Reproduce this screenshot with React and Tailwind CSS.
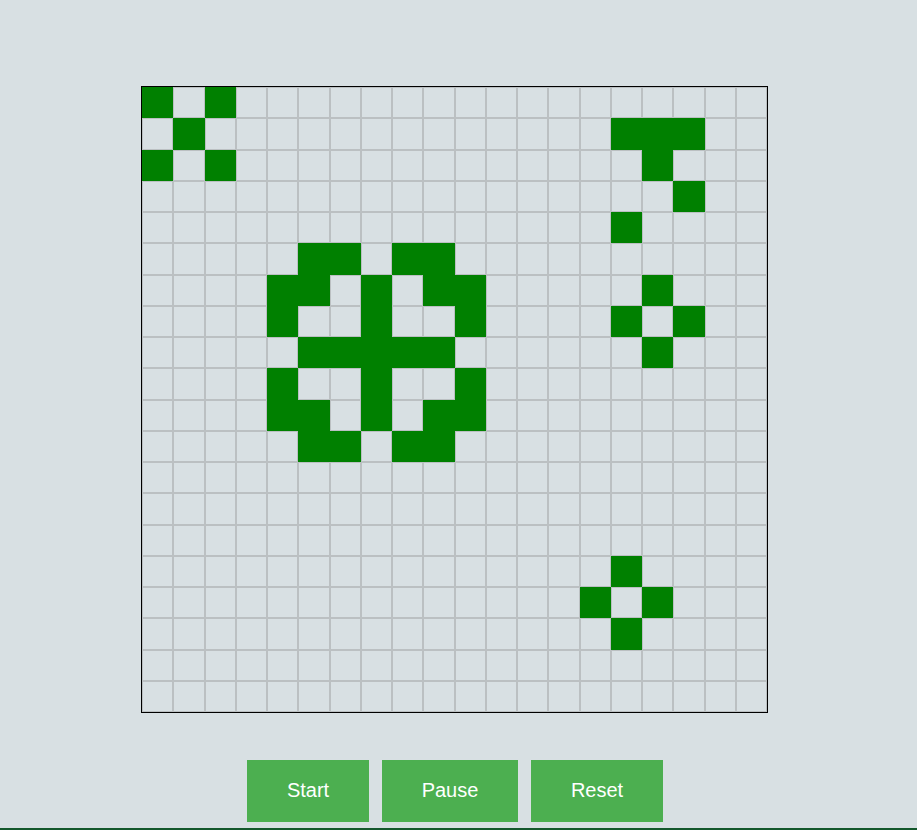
import React from 'react';

const SIZE = 20;

const LIVE = [
    [0, 0], [0, 2], [1, 1], [2, 0], [2, 2],
    [1, 15], [1, 16], [1, 17], [2, 16], [3, 17], [4, 15],
    [6, 16], [7, 15], [7, 17], [8, 16],
    [5, 5], [5, 6], [5, 8], [5, 9],
    [6, 4], [6, 5], [6, 7], [6, 9], [6, 10],
    [7, 4], [7, 7], [7, 10],
    [8, 5], [8, 6], [8, 7], [8, 8], [8, 9],
    [9, 4], [9, 7], [9, 10],
    [10, 4], [10, 5], [10, 7], [10, 9], [10, 10],
    [11, 5], [11, 6], [11, 8], [11, 9],
    [15, 15], [16, 14], [16, 16], [17, 15],
];

const alive = new Set(LIVE.map(([r, c]) => `${r}-${c}`));

export default function App() {
    const cells = [];
    for (let r = 0; r < SIZE; r++) {
        for (let c = 0; c < SIZE; c++) {
            const on = alive.has(`${r}-${c}`);
            cells.push(
                <div
                    key={`${r}-${c}`}
                    className={on ? 'border border-[#008000] bg-[#008000]' : 'border border-[rgba(128,128,128,0.33)]'}
                />
            );
        }
    }

    return (
        <div className="min-h-[830px] bg-[#d8e0e3] font-['Liberation_Sans',Arial,sans-serif]">
            <div className="flex flex-col items-center pt-[86px] pr-[8px]">
                <div className="border border-black">
                    <div className="grid w-[625px] h-[625px] grid-cols-[repeat(20,1fr)] grid-rows-[repeat(20,1fr)]">
                        {cells}
                    </div>
                </div>
                <div className="flex gap-[13px] mt-[47px] ml-[1px]">
                    <button className="w-[122px] h-[62px] pb-[2px] bg-[#4caf50] text-white text-[20px]">Start</button>
                    <button className="w-[136px] h-[62px] pb-[2px] bg-[#4caf50] text-white text-[20px]">Pause</button>
                    <button className="w-[132px] h-[62px] pb-[2px] bg-[#4caf50] text-white text-[20px]">Reset</button>
                </div>
            </div>
            <div className="mt-[6px] h-[40px] bg-[#14582c]" />
        </div>
    );
}
